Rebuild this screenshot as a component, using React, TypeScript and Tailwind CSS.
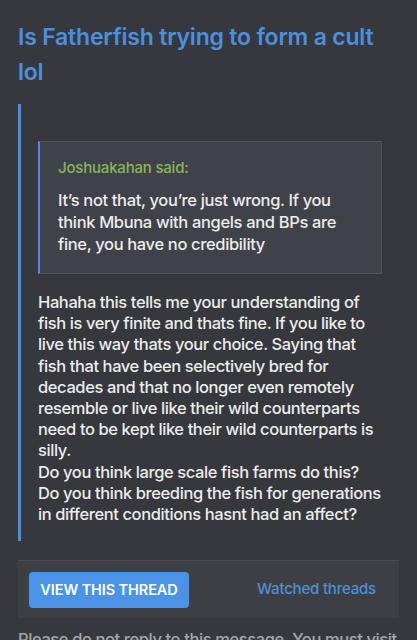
export default function App() {
  const font = { fontFamily: "Inter, 'Noto Sans', sans-serif" };
  return (
    <div
      className="w-[417px] h-[640px] overflow-hidden bg-[#36383d] pl-[18px] pr-[18px] pt-[20px]"
      style={font}
    >
      <h1 className="text-[23px] leading-[35px] font-semibold text-[#4a90dd] tracking-[-0.2px]">
        Is Fatherfish trying to form a cult lol
      </h1>
      <div className="mt-[14px] border-l-[3px] border-[#4a90e2] pl-[17px] pr-[17px] pt-[37px] pb-[16px]">
        <div className="bg-[#40424a] border border-[#52555c] border-l-[2px] border-l-[#4a90e2] pl-[18px] pr-[16px] pt-[16px] pb-[18px]">
          <div className="text-[15px] leading-[20px] font-medium text-[#8db35a] tracking-[-0.2px]">
            Joshuakahan said:
          </div>
          <p className="mt-[11px] text-[16.5px] leading-[22px] font-medium text-[#ececec] tracking-[-0.35px]">
            It’s not that, you’re just wrong. If you think Mbuna with angels and BPs are fine, you have no credibility
          </p>
        </div>
        <p className="mt-[18px] text-[16.5px] leading-[21.2px] font-medium text-[#ececec] tracking-[-0.4px]">
          Hahaha this tells me your understanding of fish is very finite and thats fine. If you like to live this way thats your choice. Saying that fish that have been selectively bred for decades and that no longer even remotely resemble or live like their wild counterparts need to be kept like their wild counterparts is silly.
          <br />
          Do you think large scale fish farms do this? Do you think breeding the fish for generations in different conditions hasnt had an affect?
        </p>
      </div>
      <div className="mt-[19px] h-[58px] bg-[#3d3f45] border-t border-[#4b4d53] flex items-center justify-between pl-[11px] pr-[23px]">
        <button className="w-[160px] h-[36px] rounded-[4px] bg-[#4a93e6] text-white text-[14.5px] font-semibold tracking-[-0.1px]">
          VIEW THIS THREAD
        </button>
        <span className="text-[15px] font-medium text-[#4f8fd6] tracking-[-0.2px]">Watched threads</span>
      </div>
      <p className="mt-[11px] text-[16.5px] leading-[21px] font-medium text-[#a4a6aa] whitespace-nowrap tracking-[-0.4px]">
        Please do not reply to this message. You must visit
      </p>
    </div>
  );
}
